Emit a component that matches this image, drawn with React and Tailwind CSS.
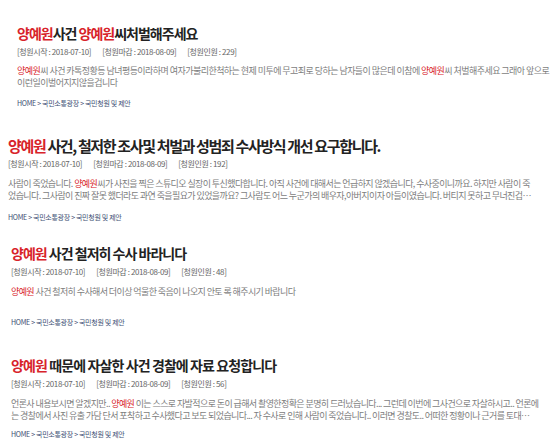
import React from "react";

const R = ({ children }) => <span className="text-[#d8232a]">{children}</span>;

function Meta({ start, end, count }) {
  return (
    <div className="flex gap-[11px] text-[8px] leading-[12px] tracking-[-0.4px] text-[#666]">
      <span>[청원시작 : {start}]</span>
      <span>[청원마감 : {end}]</span>
      <span>[청원인원 : {count}]</span>
    </div>
  );
}

function Crumb() {
  return (
    <div className="text-[7px] leading-[12px] tracking-[-0.3px] text-[#3d4f73]">
      HOME &gt; 국민소통광장 &gt; 국민청원 및 제안
    </div>
  );
}

export default function App() {
  return (
    <div
      className="w-[560px] h-[445px] overflow-hidden bg-white"
      style={{ fontFamily: '"Noto Sans CJK KR", "Noto Sans", sans-serif' }}
    >
      {/* Block 1 */}
      <div className="pl-[17px] pt-[23px]">
        <div className="text-[14px] leading-[20px] font-bold tracking-[-1px] text-[#222] whitespace-nowrap">
          <R>양예원</R>사건 <R>양예원</R>씨처벌해주세요
        </div>
        <div className="mt-[3px]">
          <Meta start="2018-07-10" end="2018-08-09" count="229" />
        </div>
        <div className="mt-[7px] text-[9px] leading-[12px] tracking-[-0.55px] text-[#7d7d7d] whitespace-nowrap">
          <div><R>양예원</R>씨 사건 카톡정황등 남녀평등이라하며 여자가불리한척하는 현제 미투에 무고죄로 당하는 남자들이 많은데 이참에 <R>양예원</R>씨 처벌해주세요 그래아 앞으로</div>
          <div>이런일이벌어지지않을겁니다</div>
        </div>
        <div className="mt-[8px]">
          <Crumb />
        </div>
      </div>

      {/* Block 2 */}
      <div className="pl-[8px] pt-[27px]">
        <div className="text-[15px] leading-[20px] font-bold tracking-[-1.35px] text-[#222] whitespace-nowrap">
          <R>양예원</R> 사건, 철저한 조사및 처벌과 성범죄 수사방식 개선 요구합니다.
        </div>
        <div className="mt-[2px]">
          <Meta start="2018-07-10" end="2018-08-09" count="192" />
        </div>
        <div className="mt-[8px] text-[9px] leading-[12px] tracking-[-0.6px] text-[#7d7d7d] whitespace-nowrap">
          <div>사람이 죽었습니다. <R>양예원</R>씨가 사진을 찍은 스튜디오 실장이 투신했다합니다. 아직 사건에 대해서는 언급하지 않겠습니다, 수사중이니까요. 하지만 사람이 죽</div>
          <div>었습니다. 그사람이 진짜 잘못 했더라도 과연 죽을필요가 있었을까요? 그사람도 어느 누군가의 배우자,아버지이자 아들이였습니다. 버티지 못하고 무너진겁…</div>
        </div>
        <div className="mt-[9px]">
          <Crumb />
        </div>
      </div>

      {/* Block 3 */}
      <div className="pl-[11px] pt-[20px]">
        <div className="text-[14px] leading-[20px] font-bold tracking-[-1px] text-[#222] whitespace-nowrap">
          <R>양예원</R> 사건 철저히 수사 바라니다
        </div>
        <div className="mt-[3px]">
          <Meta start="2018-07-10" end="2018-08-09" count="48" />
        </div>
        <div className="mt-[8px] text-[9px] leading-[12px] tracking-[-0.6px] text-[#7d7d7d] whitespace-nowrap">
          <div><R>양예원</R> 사건 철저히 수사해서 더이상 억울한 죽음이 나오지 안토 록 해주시기 바랍니다</div>
        </div>
        <div className="mt-[18px]">
          <Crumb />
        </div>
      </div>

      {/* Block 4 */}
      <div className="pl-[11px] pt-[27px]">
        <div className="text-[14px] leading-[20px] font-bold tracking-[-0.9px] text-[#222] whitespace-nowrap">
          <R>양예원</R> 때문에 자살한 사건 경찰에 자료 요청합니다
        </div>
        <div className="mt-[3px]">
          <Meta start="2018-07-10" end="2018-08-09" count="56" />
        </div>
        <div className="mt-[8px] text-[9px] leading-[12px] tracking-[-0.6px] text-[#7d7d7d] whitespace-nowrap">
          <div>언론사 내용보시면 알겠지만.. <R>양예원</R> 이는 스스로 자발적으로 돈이 급해서 촬영한정확은 분명히 드러났습니다... 그런데 이번에 그사건으로 자살하시고.. 언론에</div>
          <div>는 경찰에서 사진 유출 가담 단서 포착하고 수사했다고 보도 되었습니다... 자 수사로 인해 사람이 죽었습니다.. 이러면 경찰도.. 어떠한 정황이나 근거를 토대…</div>
        </div>
        <div className="mt-[6px]">
          <Crumb />
        </div>
      </div>
    </div>
  );
}
